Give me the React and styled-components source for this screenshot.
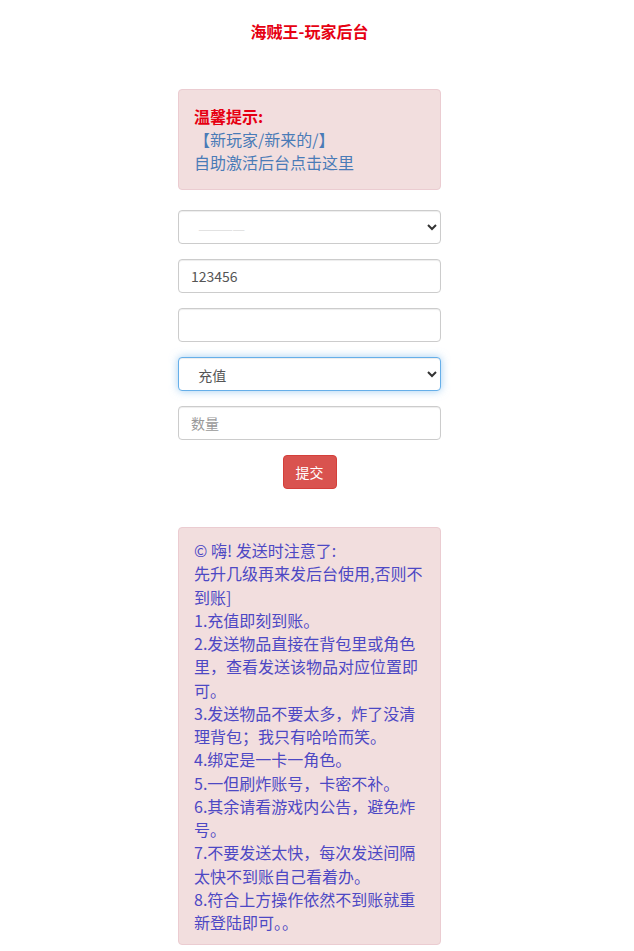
import React, { useState } from "react";
import styled, { createGlobalStyle } from "styled-components";

const GlobalStyle = createGlobalStyle`
  body {
    margin: 0;
    background: #fff;
    font-family: "Noto Sans CJK SC", "Liberation Sans", sans-serif;
    font-size: 14px;
    color: #333;
  }
  * { box-sizing: border-box; }
`;

const Page = styled.div`
  width: 619px;
  padding-top: 19px;
  padding-bottom: 6px;
`;

const Title = styled.h3`
  margin: 0 0 46px;
  text-align: center;
  color: #e60012;
  font-size: 16px;
  font-weight: bold;
  line-height: 24px;
`;

const Column = styled.div`
  width: 263px;
  margin: 0 auto;
`;

const Alert = styled.div`
  background: #f2dede;
  border: 1px solid #ebccd1;
  border-radius: 4px;
  padding: ${(p) => p.$pad || "15px"};
  font-size: 16px;
  line-height: ${(p) => p.$lh || "23px"};
  color: ${(p) => p.$color || "#4a7bb7"};
  margin-bottom: ${(p) => p.$mb || "0"};
`;

const AlertHead = styled.div`
  color: #e60012;
  font-weight: bold;
  font-size: 16px;
`;

const Form = styled.form`
  display: flex;
  flex-direction: column;
  gap: 15px;
`;

const Field = styled.input`
  width: 100%;
  height: 34px;
  padding: 6px 12px;
  border: 1px solid #ccc;
  border-radius: 4px;
  font-family: inherit;
  font-size: 14px;
  color: #555;
  box-shadow: inset 0 1px 1px rgba(0, 0, 0, 0.075);
  &::placeholder { color: #999; }
  &:focus { outline: none; }
`;

const Select = styled.select`
  width: 100%;
  height: 34px;
  padding: 6px 12px;
  border: 1px solid ${(p) => (p.$focus ? "#66afe9" : "#ccc")};
  border-radius: 4px;
  background: #fff;
  font-family: inherit;
  font-size: 14px;
  color: #333;
  -webkit-text-fill-color: ${(p) => (p.$faint ? "#e2e2e2" : "#555")};
  box-shadow: ${(p) =>
    p.$focus
      ? "inset 0 1px 1px rgba(0,0,0,.075), 0 0 8px rgba(102,175,233,.6)"
      : "inset 0 1px 1px rgba(0, 0, 0, 0.075)"};
  &:focus { outline: none; }
`;

const ButtonRow = styled.div`
  display: flex;
  justify-content: center;
`;

const Submit = styled.button`
  width: 54px;
  height: 34px;
  background: #d9534f;
  border: 1px solid #d43f3a;
  border-radius: 4px;
  color: #fff;
  font-family: inherit;
  font-size: 14px;
  cursor: pointer;
`;

const Spacer = styled.div`
  height: 38px;
`;

const notes = [
  "© 嗨! 发送时注意了:",
  "先升几级再来发后台使用,否则不到账]",
  "1.充值即刻到账。",
  "2.发送物品直接在背包里或角色里，查看发送该物品对应位置即可。",
  "3.发送物品不要太多，炸了没清理背包；我只有哈哈而笑。",
  "4.绑定是一卡一角色。",
  "5.一但刷炸账号，卡密不补。",
  "6.其余请看游戏内公告，避免炸号。",
  "7.不要发送太快，每次发送间隔太快不到账自己看着办。",
  "8.符合上方操作依然不到账就重新登陆即可。。",
];

const App = () => {
  const [form, setForm] = useState({ pwd: "123456", role: "", type: "pay", num: "" });

  const handleChange = (e) => {
    const { name, value } = e.target;
    setForm((prev) => ({ ...prev, [name]: value }));
  };

  return (
    <Page>
      <GlobalStyle />
      <Title>海贼王-玩家后台</Title>
      <Column>
        <Alert $mb="20px">
          <AlertHead>温馨提示:</AlertHead>
          <div>【新玩家/新来的/】</div>
          <div>自助激活后台点击这里</div>
        </Alert>
        <Form onSubmit={(e) => e.preventDefault()}>
          <Select $faint name="server" defaultValue="s1">
            <option value="s1">&nbsp;————</option>
          </Select>
          <Field name="pwd" value={form.pwd} onChange={handleChange} />
          <Field name="role" value={form.role} onChange={handleChange} />
          <Select $focus name="type" value={form.type} onChange={handleChange}>
            <option value="pay">&nbsp;充值</option>
            <option value="item">&nbsp;物品</option>
          </Select>
          <Field name="num" placeholder="数量" value={form.num} onChange={handleChange} />
          <ButtonRow>
            <Submit type="submit">提交</Submit>
          </ButtonRow>
        </Form>
        <Spacer />
        <Alert $color="#4d48c4" $lh="23.25px" $pad="11px 15px 10px">
          {notes.map((n) => (
            <div key={n}>{n}</div>
          ))}
        </Alert>
      </Column>
    </Page>
  );
};

export default App;
